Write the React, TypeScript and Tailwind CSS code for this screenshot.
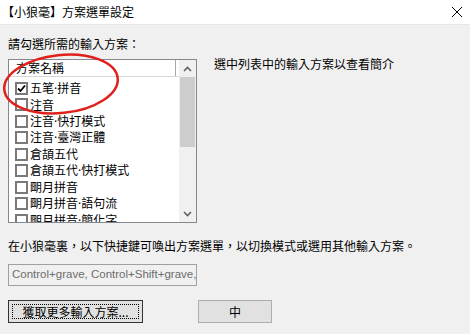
import React from "react";

const font = { fontFamily: '"Noto Sans CJK TC", "Noto Sans", sans-serif' };

const schemas = [
  { name: "五笔·拼音", checked: true },
  { name: "注音" },
  { name: "注音·快打模式" },
  { name: "注音·臺灣正體" },
  { name: "倉頡五代" },
  { name: "倉頡五代·快打模式" },
  { name: "朙月拼音" },
  { name: "朙月拼音·語句流" },
  { name: "朙月拼音·簡化字" },
];

// the CJK font sets "·" full width; the reference shows a narrow dot
function SchemaName({ name }: { name: string }) {
  const parts = name.split("·");
  return (
    <span className="text-[12px] leading-[16px] text-black whitespace-nowrap">
      {parts.map((p, i) => (
        <React.Fragment key={i}>
          {i > 0 && <span style={{ fontFamily: '"Noto Sans", sans-serif' }}>·</span>}
          {p}
        </React.Fragment>
      ))}
    </span>
  );
}

function CheckBox({ checked }: { checked?: boolean }) {
  return (
    <div className="w-[13px] h-[13px] border-2 border-[#7a7a7a] bg-white flex items-center justify-center shrink-0">
      {checked && (
        <svg width="9" height="9" viewBox="0 0 9 9">
          <path d="M1 4.5 L3.5 7 L8 1.5" fill="none" stroke="#000" strokeWidth="1.8" />
        </svg>
      )}
    </div>
  );
}

function SchemaList() {
  return (
    <div className="w-[189px] h-[164px] border border-[#828790] bg-white flex shrink-0">
      <div className="flex-1 flex flex-col overflow-hidden">
        {/* header */}
        <div className="h-[17px] flex border-b border-[#d6d6d6] shrink-0">
          <div className="w-[167px] border-r border-[#a8a8a8] pl-[7px] text-[12px] leading-[16px] text-black">
            方案名稱
          </div>
        </div>
        {/* rows */}
        <div className="flex flex-col pt-[3px]">
          {schemas.map((s) => (
            <div key={s.name} className="h-[16.5px] flex items-center pl-[6px] gap-[2px] shrink-0">
              <CheckBox checked={s.checked} />
              <SchemaName name={s.name} />
            </div>
          ))}
        </div>
      </div>
      {/* scrollbar */}
      <div className="w-[17px] bg-[#f0f0f0] flex flex-col">
        <div className="h-[17px] flex items-center justify-center">
          <svg width="9" height="6" viewBox="0 0 9 6">
            <path d="M1 5 L4.5 1.5 L8 5" fill="none" stroke="#606060" strokeWidth="1.6" />
          </svg>
        </div>
        <div className="h-[70px] mx-[1px] bg-[#cdcdcd]" />
        <div className="flex-1" />
        <div className="h-[17px] flex items-center justify-center">
          <svg width="9" height="6" viewBox="0 0 9 6">
            <path d="M1 1 L4.5 4.5 L8 1" fill="none" stroke="#606060" strokeWidth="1.6" />
          </svg>
        </div>
      </div>
    </div>
  );
}

export default function App() {
  return (
    <div className="w-[470px] h-[334px] bg-[#f0f0f0] relative overflow-hidden" style={font}>
      {/* title bar */}
      <div className="h-[25px] bg-white border-b border-[#e6e6e6] flex items-center justify-between pl-[2px] pr-[7px]">
        <span className="text-[12px] leading-[16px] text-black">【小狼毫】方案選單設定</span>
        <svg width="12" height="12" viewBox="0 0 12 12">
          <path d="M1 1 L11 11 M11 1 L1 11" stroke="#000" strokeWidth="1" />
        </svg>
      </div>

      <div className="px-[8px]">
        <div className="mt-[11px] text-[12px] leading-[16px] text-black">請勾選所需的輸入方案：</div>

        <div className="mt-[7px] flex items-start">
          <SchemaList />
          <div className="ml-[17px] -mt-[3px] text-[12px] leading-[16px] text-black">
            選中列表中的輸入方案以查看簡介
          </div>
        </div>

        <div className="mt-[15px] text-[12px] leading-[16px] text-black whitespace-nowrap">
          在小狼毫裏，以下快捷鍵可喚出方案選單，以切換模式或選用其他輸入方案。
        </div>

        <div className="mt-[10px] w-[189px] h-[22px] border border-[#a0a0a0] bg-[#f0f0f0] flex items-center px-[3px] overflow-hidden">
          <span
            className="text-[11.5px] text-[#6d6d6d] whitespace-nowrap"
            style={{ fontFamily: '"Liberation Sans", sans-serif' }}
          >
            Control+grave, Control+Shift+grave,
          </span>
        </div>

        <div className="mt-[14px] flex">
          <button className="w-[135px] h-[23px] border border-[#333333] bg-[#e1e1e1] p-[3px]">
            <div className="w-full h-full border border-dotted border-black flex items-center justify-center text-[12px] leading-[16px] text-black">
              獲取更多輸入方案...
            </div>
          </button>
          <button className="ml-[55px] w-[74px] h-[23px] border border-[#adadad] bg-[#e1e1e1] flex items-center justify-center text-[12px] leading-[16px] text-black">
            中
          </button>
        </div>
      </div>

      {/* red annotation ring */}
      <svg className="absolute left-0 top-0 pointer-events-none" width="470" height="334">
        <ellipse cx="61" cy="84" rx="57" ry="29" transform="rotate(-6 61 84)" fill="none" stroke="#e0201c" strokeWidth="2.5" />
      </svg>
    </div>
  );
}
